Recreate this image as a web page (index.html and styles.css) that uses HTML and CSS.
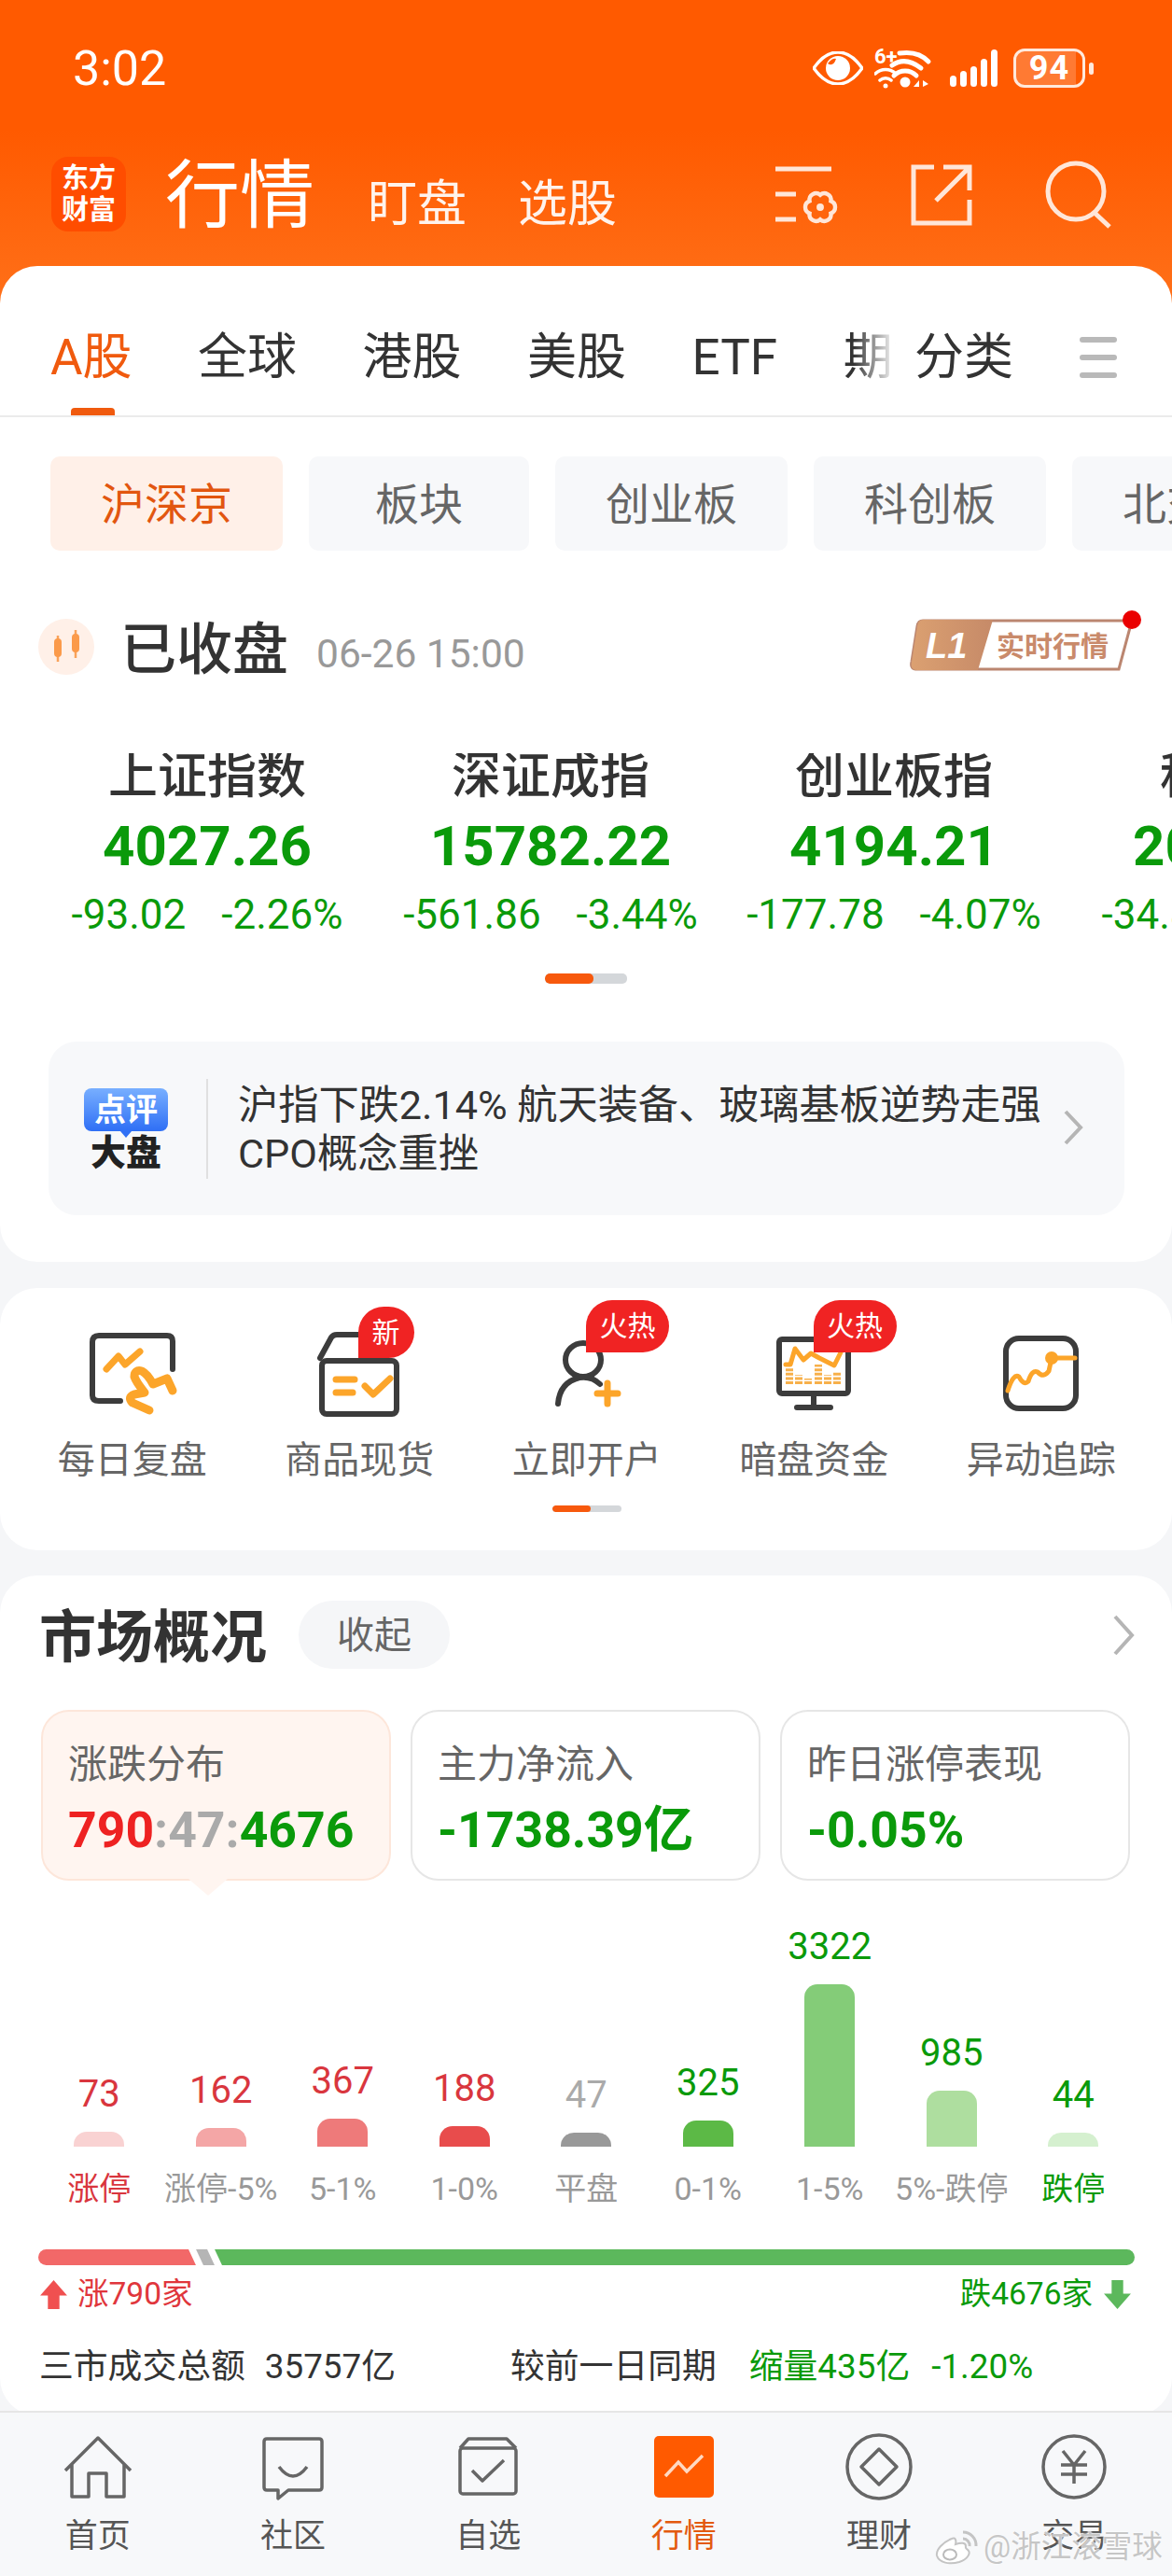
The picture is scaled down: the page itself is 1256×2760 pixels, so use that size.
FILE: index.html
```html
<!DOCTYPE html>
<html lang="zh-CN">
<head>
    <meta charset="UTF-8">
    <title>行情</title>
    <link rel="stylesheet" href="styles.css">
</head>
<body>
<div class="page">
    <div class="scroll">
        <header class="hero">
            <div class="statusbar">
                <span class="clock">3:02</span>
                <div class="status-icons">
                    <svg class="ic-eye" viewBox="0 0 54 36"><path d="M1 18Q13 1 27 1T53 18Q41 35 27 35T1 18Z" fill="none" stroke="#fff" stroke-width="3.5"/><circle cx="27" cy="18" r="13" fill="#fff"/><path d="M16 13Q22 17 25 8Q21 7 16 13Z" fill="#ff5a00"/></svg>
                    <svg class="ic-wifi" viewBox="0 0 62 44"><text x="0" y="17" class="wifi-six">6+</text><circle cx="33" cy="37" r="5.5" fill="#fff"/><path d="M21 30A17 17 0 0 1 45 30" class="wifi-arc"/><path d="M19 19Q33 9 50 22M27 6Q47 3 58 15" class="wifi-arc"/><circle cx="12" cy="41" r="2.5" fill="#fff"/><path d="M6 35A9 9 0 0 1 18 35M1 28A16 16 0 0 1 23 28" class="wifi-arc wifi-thin"/><path d="M42 42L48 35V42ZM52 35L58 39L52 42Z" fill="#fff"/></svg>
                    <div class="signal">
                        <span class="sig-1"></span><span class="sig-2"></span><span class="sig-3"></span><span class="sig-4"></span><span class="sig-5"></span>
                    </div>
                    <div class="battery"><div class="battery-body">94</div><span class="battery-nub"></span></div>
                </div>
            </div>
            <div class="appbar">
                <div class="logo">东方<br>财富</div>
                <div class="app-title">
                    <span class="app-main">行情</span>
                    <span class="app-sub first">盯盘</span>
                    <span class="app-sub">选股</span>
                </div>
                <svg class="ic-set" viewBox="0 0 72 68"><path d="M2 5H62M2 32H24M2 59H24" class="head-line"/><g transform="translate(50 46) scale(.88)"><path d="M13 -7.5A8 8 0 0 1 13 7.5A8 8 0 0 1 0 15A8 8 0 0 1 -13 7.5A8 8 0 0 1 -13 -7.5A8 8 0 0 1 0 -15A8 8 0 0 1 13 -7.5Z" class="head-line"/><circle r="4.5" fill="#ffe6d8"/></g></svg>
                <svg class="ic-share" viewBox="0 0 66 66"><path d="M25 3H3V63H63V38M35 3H63V28M63 3L27 39" class="head-line"/></svg>
                <svg class="ic-search" viewBox="0 0 72 74"><circle cx="33" cy="33" r="30" class="head-line"/><path d="M53 56L69 71" class="head-line"/></svg>
            </div>
        </header>

        <section class="card card-main">
            <nav class="tabs">
                <div class="tabs-scroll">
                    <span class="tab active">A股</span>
                    <span class="tab">全球</span>
                    <span class="tab">港股</span>
                    <span class="tab">美股</span>
                    <span class="tab">ETF</span>
                    <span class="tab">期货</span>
                </div>
                <span class="tab tab-more">分类</span>
                <div class="tab-menu"><i></i><i></i><i></i></div>
            </nav>

            <div class="chips">
                <span class="chip chip-on">沪深京</span>
                <span class="chip chip-b">板块</span>
                <span class="chip">创业板</span>
                <span class="chip">科创板</span>
                <span class="chip">北交所</span>
            </div>

            <div class="close-row">
                <svg class="close-icon" viewBox="0 0 60 60"><circle cx="30" cy="30" r="30" fill="#fff0e8"/><path d="M21 18V46M40 12V42" stroke="#f9a25a" stroke-width="2.5"/><rect x="17" y="21" width="8" height="20" rx="4" fill="#fb9a4a"/><rect x="36" y="16" width="8" height="20" rx="4" fill="#fb9a4a"/></svg>
                <span class="close-title">已收盘</span>
                <span class="close-time">06-26 15:00</span>
                <svg class="live-badge" viewBox="0 0 250 70">
                    <defs><linearGradient id="lg" x1="0" x2="1"><stop offset="0" stop-color="#dba071"/><stop offset="1" stop-color="#c68a68"/></linearGradient></defs>
                    <path d="M14 15H238L224 67H8Q0 67 2 59L8 21Q9 15 14 15Z" fill="#fff" stroke="#bb8670" stroke-width="3"/>
                    <path d="M14 14H89L73 68H8Q0 68 2 59L8 21Q9 14 14 14Z" fill="url(#lg)"/>
                    <text x="17" y="55" class="live-l1">L1</text>
                    <text x="93" y="53" class="live-text">实时行情</text>
                    <circle cx="238" cy="14" r="10" fill="#ea0000"/>
                </svg>
            </div>

            <div class="indexes">
                <div class="index">
                    <div class="index-name">上证指数</div>
                    <div class="index-val">4027.26</div>
                    <div class="index-chg"><span>-93.02</span><span>-2.26%</span></div>
                </div>
                <div class="index">
                    <div class="index-name">深证成指</div>
                    <div class="index-val">15782.22</div>
                    <div class="index-chg"><span>-561.86</span><span>-3.44%</span></div>
                </div>
                <div class="index">
                    <div class="index-name">创业板指</div>
                    <div class="index-val">4194.21</div>
                    <div class="index-chg"><span>-177.78</span><span>-4.07%</span></div>
                </div>
                <div class="index">
                    <div class="index-name">科创50</div>
                    <div class="index-val">2085.63</div>
                    <div class="index-chg"><span>-34.82</span><span>-2.71%</span></div>
                </div>
            </div>

            <div class="dots dots-wide"><i></i></div>

            <div class="comment">
                <div class="comment-logo">
                    <div class="comment-bubble">点评</div>
                    <div class="comment-big">大盘</div>
                </div>
                <div class="comment-text">沪指下跌2.14% 航天装备、玻璃基板逆势走强<br>CPO概念重挫</div>
                <svg class="chev comment-chev" viewBox="0 0 22 38"><path d="M3 2L19 19L3 36"/></svg>
            </div>
        </section>

        <section class="card quick">
            <div class="quick-grid">
                <div class="quick-item">
                    <svg viewBox="0 0 120 100"><path d="M103 42V12Q103 6 97 6H24Q17 6 17 13V70Q17 76 24 76H47" class="q-dark"/><path d="M32 42L45 28L52 37L68 23" class="q-org"/><path d="M78 86L60 78Q54 72 62 69L73 67Q64 56 62 50Q62 42 70 44Q76 47 82 58L97 52L103 65" class="q-org q-fat"/></svg>
                    <span>每日复盘</span>
                </div>
                <div class="quick-item">
                    <svg viewBox="0 0 120 100"><path d="M18 30L30 8Q32 5 36 5H70" class="q-dark"/><rect x="20" y="33" width="80" height="57" rx="5" class="q-dark"/><path d="M35 53H55M35 67H53M66 60L75 69L93 52" class="q-org"/></svg>
                    <span>商品现货</span>
                    <b class="tag tag-new">新</b>
                </div>
                <div class="quick-item">
                    <svg viewBox="0 0 120 100"><ellipse cx="56" cy="32" rx="19" ry="18" class="q-dark"/><path d="M29 79Q31 56 52 51Q65 49 74 58" class="q-dark"/><path d="M82 57V79M71 68H93" class="q-org"/></svg>
                    <span>立即开户</span>
                    <b class="tag tag-hot">火热</b>
                </div>
                <div class="quick-item">
                    <svg viewBox="0 0 120 100"><rect x="23" y="10" width="74" height="58" rx="3" class="q-dark"/><path d="M60 69V82M42 83H78" class="q-dark"/><path d="M30 37H35L40 20L49 32L57 25L66 30L82 38L89 24" class="q-org q-thin"/><path d="M34 58V40M44 58V48M54 58V52M65 58V37M75 58V48M85 58V45" class="q-bars"/></svg>
                    <span>暗盘资金</span>
                    <b class="tag tag-hot">火热</b>
                </div>
                <div class="quick-item">
                    <svg viewBox="0 0 120 100"><rect x="22" y="9" width="75" height="75" rx="14" class="q-dark"/><path d="M24 65Q30 46 36 50Q41 60 46 55Q50 42 56 45Q62 52 68 44L71 30H96" class="q-org q-thin"/><circle cx="71" cy="30" r="7" fill="#fca52a"/></svg>
                    <span>异动追踪</span>
                </div>
            </div>
            <div class="dots dots-small"><i></i></div>
        </section>

        <section class="card market">
            <div class="market-head">
                <h2 class="market-title">市场概况</h2>
                <span class="market-pill">收起</span>
                <svg class="chev market-chev" viewBox="0 0 26 44"><path d="M4 2L22 22L4 42"/></svg>
            </div>

            <div class="stats">
                <div class="stat stat-on">
                    <div class="stat-title">涨跌分布</div>
                    <div class="stat-val"><span class="up">790</span><span class="flat">:47:</span><span class="down">4676</span></div>
                </div>
                <div class="stat">
                    <div class="stat-title">主力净流入</div>
                    <div class="stat-val down">-1738.39亿</div>
                </div>
                <div class="stat">
                    <div class="stat-title">昨日涨停表现</div>
                    <div class="stat-val down">-0.05%</div>
                </div>
            </div>

            <div class="chart">
                <div class="col"><span class="col-num up-soft">73</span><i class="b1" style="height:16px"></i></div>
                <div class="col"><span class="col-num up-soft">162</span><i class="b2" style="height:20px"></i></div>
                <div class="col"><span class="col-num up-soft">367</span><i class="b3" style="height:30px"></i></div>
                <div class="col"><span class="col-num up-soft">188</span><i class="b4" style="height:22px"></i></div>
                <div class="col"><span class="col-num flat">47</span><i class="b5" style="height:15px"></i></div>
                <div class="col"><span class="col-num down">325</span><i class="b6" style="height:28px"></i></div>
                <div class="col"><span class="col-num down">3322</span><i class="b7" style="height:174px"></i></div>
                <div class="col"><span class="col-num down">985</span><i class="b8" style="height:60px"></i></div>
                <div class="col"><span class="col-num down">44</span><i class="b9" style="height:15px"></i></div>
            </div>
            <div class="chart-labels">
                <span class="up-soft">涨停</span>
                <span>涨停-5%</span>
                <span>5-1%</span>
                <span>1-0%</span>
                <span>平盘</span>
                <span>0-1%</span>
                <span>1-5%</span>
                <span>5%-跌停</span>
                <span class="down">跌停</span>
            </div>

            <div class="ratio"><i class="ratio-up"></i><i class="ratio-flat"></i><i class="ratio-down"></i></div>
            <div class="updown">
                <span class="updown-up"><svg viewBox="0 0 30 32"><path d="M15 1L29 17H21V31H9V17H1Z" fill="#f05050"/></svg>涨790家</span>
                <span class="updown-down">跌4676家<svg viewBox="0 0 30 32"><path d="M9 1H21V15H29L15 31L1 15H9Z" fill="#5cb85c"/></svg></span>
            </div>

            <div class="turnover">
                <div class="turn-left"><span>三市成交总额</span><span class="turn-num">35757亿</span></div>
                <span>较前一日同期</span>
                <span class="down turn-diff">缩量435亿</span>
                <span class="down turn-pct">-1.20%</span>
            </div>
        </section>
    </div>

    <footer class="bottom-nav">
        <div class="nav-item">
            <svg viewBox="0 0 90 76"><path d="M10 41L45 6L80 41M17 34V69H35V44H54V69H73V34" class="nav-line"/></svg>
            <span>首页</span>
        </div>
        <div class="nav-item">
            <svg viewBox="0 0 90 76"><path d="M17 7H73Q76 7 76 10V59Q76 62 73 62H40L29 71V62H17Q14 62 14 59V10Q14 7 17 7Z" class="nav-line"/><path d="M30 37Q45 57 60 37" class="nav-line"/></svg>
            <span>社区</span>
        </div>
        <div class="nav-item">
            <svg viewBox="0 0 90 76"><rect x="15" y="17" width="60" height="49" rx="3" class="nav-line"/><path d="M15 17L24 7H65L75 17M28 41L39 52L62 30" class="nav-line"/></svg>
            <span>自选</span>
        </div>
        <div class="nav-item nav-on">
            <svg viewBox="0 0 90 76"><rect x="13" y="4" width="64" height="66" rx="5" fill="#ff5a00"/><path d="M25 47L39 32L48 42L65 25" fill="none" stroke="#ffd9c2" stroke-width="3.5"/></svg>
            <span>行情</span>
        </div>
        <div class="nav-item">
            <svg viewBox="0 0 90 76"><circle cx="45" cy="37" r="34" class="nav-line"/><path d="M45 18L64 37L45 56L26 37Z" class="nav-line"/></svg>
            <span>理财</span>
        </div>
        <div class="nav-item">
            <svg viewBox="0 0 90 76"><circle cx="45" cy="37" r="33" class="nav-line"/><path d="M33 20L45 35L57 20M31 35H59M31 45H59M45 35V55" class="nav-line"/></svg>
            <span>交易</span>
        </div>
        <div class="watermark">
            <svg viewBox="0 0 46 38"><path d="M18 10C8 14 1 22 2 28C4 36 16 38 26 35C35 32 38 26 36 23C35 21 32 21 33 18C33 14 28 14 22 16C23 12 22 8 18 10Z" fill="#fff" stroke="#c4c4c4" stroke-width="2"/><ellipse cx="16" cy="27" rx="7" ry="5.5" fill="none" stroke="#bbb" stroke-width="2"/><path d="M30 10A7 7 0 0 1 37 18M30 3A14 14 0 0 1 44 18" fill="none" stroke="#c4c4c4" stroke-width="3"/></svg>
            <span>@浙江滚雪球</span>
        </div>
    </footer>
</div>
</body>
</html>
```

FILE: styles.css
```css
* {
    box-sizing: border-box;
}
body {
    margin: 0;
    font-family: Roboto, "Noto Sans CJK SC", sans-serif;
    color: #333;
    background: #f5f6f8;
}
.page {
    width: 1256px;
    height: 2760px;
    display: flex;
    flex-direction: column;
    overflow: hidden;
}
.scroll {
    flex: 1;
    min-height: 0;
    overflow: hidden;
}
svg {
    display: block;
    flex: none;
}

/* orange header */
.hero {
    height: 325px;
    color: #fff;
    background: linear-gradient(#ff5a00 0, #ff5a00 140px, #ff7019 325px);
}
.statusbar {
    height: 144px;
    padding: 2px 84px 0 78px;
    display: flex;
    align-items: center;
    justify-content: space-between;
}
.clock {
    font-size: 52px;
}
.status-icons {
    display: flex;
    align-items: center;
}
.ic-eye {
    width: 54px;
    height: 36px;
}
.ic-wifi {
    width: 62px;
    height: 44px;
    margin-left: 12px;
}
.wifi-six {
    font-size: 22px;
    font-weight: 700;
    fill: #fff;
}
.wifi-arc {
    fill: none;
    stroke: #fff;
    stroke-width: 5;
    stroke-linecap: round;
}
.wifi-thin {
    stroke-width: 3.5;
}
.signal {
    margin-left: 19px;
    width: 52px;
    height: 40px;
    display: flex;
    align-items: flex-end;
    gap: 4px;
}
.signal span {
    width: 7px;
    border-radius: 4px;
    background: #fff;
}
.sig-1 { height: 12px; }
.sig-2 { height: 17px; }
.sig-3 { height: 22px; }
.sig-4 { height: 30px; }
.sig-5 { height: 40px; }
.battery {
    margin-left: 16px;
    display: flex;
    align-items: center;
    gap: 4px;
}
.battery-body {
    width: 77px;
    height: 42px;
    border: 3px solid #ffe9dc;
    border-radius: 12px;
    background: linear-gradient(90deg, #ff7a33 0, #ff7a33 90%, transparent 90%);
    font-size: 36px;
    font-weight: 700;
    line-height: 36px;
    text-align: center;
    letter-spacing: 1px;
}
.battery-nub {
    width: 5px;
    height: 13px;
    border-radius: 3px;
    background: #ffe9dc;
}
.appbar {
    padding: 24px 0 0 55px;
    display: flex;
    align-items: flex-start;
}
.logo {
    width: 80px;
    height: 80px;
    border-radius: 18px;
    background: #ff4d00;
    font-size: 29px;
    font-weight: 700;
    line-height: 34px;
    padding-top: 6px;
    text-align: center;
}
.app-title {
    margin-left: 42px;
    height: 80px;
    display: flex;
    align-items: baseline;
}
.app-main {
    font-size: 80px;
    line-height: 84px;
}
.app-sub {
    font-size: 53px;
    margin-left: 55px;
    color: #fff3ec;
}
.app-sub.first {
    margin-left: 57px;
}
.head-line {
    fill: none;
    stroke: #ffe6d8;
    stroke-width: 5;
}
.ic-set {
    width: 72px;
    height: 68px;
    margin: 8px 0 0 168px;
}
.ic-share {
    width: 66px;
    height: 66px;
    margin: 8px 0 0 75px;
}
.ic-search {
    width: 72px;
    height: 74px;
    margin: 4px 0 0 78px;
}

/* white cards */
.card {
    background: #fff;
    border-radius: 40px;
}
.card-main {
    position: relative;
    margin-top: -40px;
    padding-bottom: 50px;
}

.tabs {
    position: relative;
    height: 162px;
    padding: 69px 0 0 54px;
    display: flex;
    align-items: flex-start;
    border-bottom: 2px solid #ebebeb;
}
.tabs::after {
    content: "";
    position: absolute;
    left: 76px;
    bottom: 0;
    width: 47px;
    height: 8px;
    border-radius: 4px 4px 0 0;
    background: #f05a0e;
}
.tabs-scroll {
    width: 906px;
    display: flex;
    gap: 70.5px;
    overflow: hidden;
    -webkit-mask-image: linear-gradient(90deg, #000 95%, transparent 100%);
    mask-image: linear-gradient(90deg, #000 95%, transparent 100%);
}
.tab {
    flex: none;
    font-size: 53px;
    line-height: 58px;
    color: #333;
}
.tab.active {
    color: #f05a0e;
}
.tab-more {
    margin-left: 20px;
}
.tab-menu {
    margin: 7px 0 0 71px;
    width: 40px;
}
.tab-menu i {
    display: block;
    height: 6px;
    margin-bottom: 13px;
    border-radius: 3px;
    background: #b9b9b9;
}

.chips {
    margin-top: 42px;
    padding-left: 54px;
    display: flex;
    gap: 28px;
    overflow: hidden;
}
.chip {
    flex: none;
    width: 249px;
    height: 101px;
    border-radius: 10px;
    background: #f7f8fa;
    font-size: 47px;
    line-height: 103px;
    text-align: center;
    color: #666;
}
.chip-b {
    width: 236px;
}
.chip-on {
    background: #fff0e8;
    color: #e2560f;
}

.close-row {
    position: relative;
    margin-top: 72px;
    height: 61px;
    padding-left: 41px;
    display: flex;
    align-items: center;
}
.close-icon {
    width: 60px;
    height: 60px;
}
.close-title {
    margin: -4px 0 0 28px;
    font-size: 60px;
    font-weight: 500;
    color: #333;
}
.close-time {
    margin: 16px 0 0 30px;
    font-size: 42.5px;
    color: #999;
}
.live-badge {
    position: absolute;
    left: 975px;
    top: -12px;
    width: 250px;
    height: 70px;
}
.live-l1 {
    font-family: "Liberation Sans", sans-serif;
    font-size: 38px;
    font-weight: 700;
    font-style: italic;
    fill: #fff;
}
.live-text {
    font-size: 30px;
    font-weight: 700;
    fill: #c98a6b;
}

.indexes {
    margin-top: 84px;
    padding-left: 38px;
    display: flex;
    overflow: hidden;
}
.index {
    flex: none;
    width: 368px;
    text-align: center;
    white-space: nowrap;
}
.index-name {
    font-size: 53px;
    font-weight: 500;
    line-height: 50px;
    color: #333;
}
.index-val {
    margin-top: 15px;
    font-size: 60px;
    font-weight: 700;
    line-height: 70px;
    color: #0a9a0a;
}
.index-chg {
    margin-top: 13px;
    display: flex;
    justify-content: center;
    gap: 38px;
    font-size: 44px;
    line-height: 50px;
    color: #0a9a0a;
}

.dots {
    margin: 38px auto 0;
    background: #d4d7da;
    overflow: hidden;
}
.dots i {
    display: block;
    height: 100%;
    background: #f7590d;
}
.dots-wide {
    width: 88px;
    height: 11px;
    border-radius: 5px;
}
.dots-wide i {
    width: 52px;
    border-radius: 5px;
}
.dots-small {
    width: 74px;
    height: 7px;
    margin-top: 23px;
    border-radius: 4px;
}
.dots-small i {
    width: 41px;
    border-radius: 4px;
}

.comment {
    position: relative;
    margin: 62px 0 0 52px;
    width: 1153px;
    height: 186px;
    border-radius: 30px;
    background: #f7f8fa;
    display: flex;
    align-items: center;
}
.comment-logo {
    margin-left: 38px;
    width: 90px;
}
.comment-bubble {
    position: relative;
    height: 46px;
    border-radius: 8px;
    background: linear-gradient(#78afff, #2f6ff5);
    color: #fff;
    font-size: 34px;
    font-weight: 700;
    line-height: 46px;
    text-align: center;
}
.comment-bubble::after {
    content: "";
    position: absolute;
    left: 39px;
    top: 46px;
    border: 6px solid transparent;
    border-top: 7px solid #2f6ff5;
    border-bottom: 0;
}
.comment-big {
    margin-top: 5px;
    font-size: 38px;
    font-weight: 900;
    line-height: 36px;
    text-align: center;
    color: #222;
}
.comment-text {
    margin-left: 41px;
    padding: 3px 0 0 32px;
    border-left: 2px solid #e0e0e0;
    font-size: 43.2px;
    line-height: 52px;
    white-space: nowrap;
    color: #333;
}
.chev {
    fill: none;
}
.chev path {
    fill: none;
    stroke: #b5b5b5;
    stroke-width: 4;
}
.comment-chev {
    position: absolute;
    left: 1087px;
    top: 73px;
    width: 22px;
    height: 38px;
}

/* quick entries */
.quick {
    margin-top: 28px;
    height: 281px;
    padding: 45px 18px 0 20px;
}
.quick-grid {
    display: grid;
    grid-template-columns: repeat(5, 243.5px);
}
.quick-item {
    position: relative;
    display: flex;
    flex-direction: column;
    align-items: center;
}
.quick-item svg {
    width: 120px;
    height: 100px;
}
.quick-item span {
    margin-top: 15px;
    font-size: 40px;
    line-height: 50px;
    color: #666;
}
.q-dark,
.q-org,
.q-bars {
    fill: none;
    stroke-linecap: round;
    stroke-linejoin: round;
}
.q-dark {
    stroke: #3c3c3c;
    stroke-width: 6;
}
.q-org {
    stroke: #fca52a;
    stroke-width: 7;
}
.q-fat {
    stroke-width: 9;
}
.q-thin {
    stroke-width: 5;
}
.q-bars {
    stroke: #f7b04a;
    stroke-width: 8;
    stroke-linecap: butt;
    stroke-dasharray: 3 1.6;
}
.tag {
    position: absolute;
    border-radius: 28px 28px 28px 0;
    background: #f02323;
    color: #fff;
    font-size: 30px;
    font-weight: 400;
    text-align: center;
}
.tag-new {
    left: 120px;
    top: -25px;
    width: 60px;
    height: 55px;
    line-height: 55px;
}
.tag-hot {
    left: 121px;
    top: -32px;
    width: 89px;
    height: 56px;
    line-height: 56px;
}

/* market overview */
.market {
    margin-top: 27px;
    padding-top: 27px;
    height: 900px;
}
.market-head {
    position: relative;
    padding-left: 42px;
    height: 73px;
    display: flex;
    align-items: center;
}
.market-title {
    margin: -4px 0 0;
    font-size: 61px;
    font-weight: 700;
    color: #333;
}
.market-pill {
    margin-left: 34px;
    width: 162px;
    height: 73px;
    border-radius: 37px;
    background: #f5f6f8;
    font-size: 40px;
    line-height: 75px;
    text-align: center;
    color: #666;
}
.market-chev {
    position: absolute;
    left: 1191px;
    top: 15px;
    width: 26px;
    height: 44px;
}
.stats {
    margin: 44px 45px 0 44px;
    display: grid;
    grid-template-columns: repeat(3, 1fr);
    gap: 21px;
}
.stat {
    position: relative;
    height: 183px;
    padding: 32px 0 0 27px;
    border: 2px solid #e6e6e6;
    border-radius: 30px;
}
.stat-on {
    background: #fff5f0;
    border-color: #fde6da;
}
.stat-on::after {
    content: "";
    position: absolute;
    left: 156px;
    bottom: -18px;
    border: 21px solid transparent;
    border-top: 18px solid #fff5f0;
    border-bottom: 0;
}
.stat-title {
    font-size: 42px;
    line-height: 50px;
    color: #666;
}
.stat-val {
    margin-top: 15px;
    font-size: 53.5px;
    font-weight: 700;
    line-height: 60px;
    white-space: nowrap;
}
.up {
    color: #ee2222;
}
.up-soft {
    color: #d9363e;
}
.flat {
    color: #aaa;
}
.down {
    color: #0a9a0a;
}

.chart {
    margin-top: 45px;
    height: 240px;
    padding-left: 41px;
    display: grid;
    grid-template-columns: repeat(9, 130.5px);
    align-items: end;
}
.col {
    display: flex;
    flex-direction: column;
    align-items: center;
}
.col-num {
    font-size: 40px;
    line-height: 50px;
    margin-bottom: 15px;
}
.col i {
    display: block;
    width: 54px;
    border-radius: 14px 14px 0 0;
}
.b1 { background: #f9d2d2; }
.b2 { background: #f4a6a6; }
.b3 { background: #ee7a7a; }
.b4 { background: #e84c4c; }
.b5 { background: #999; }
.b6 { background: #5cb946; }
.b7 { background: #84cc78; }
.b8 { background: #aede9f; }
.b9 { background: #d5f0cf; }
.chart-labels {
    margin-top: 20px;
    padding-left: 41px;
    display: grid;
    grid-template-columns: repeat(9, 130.5px);
    font-size: 34px;
    line-height: 50px;
    text-align: center;
    white-space: nowrap;
    color: #999;
}
.ratio {
    margin: 40px 0 0 41px;
    width: 1175px;
    height: 17px;
    border-radius: 9px;
    display: flex;
    gap: 8px;
    overflow: hidden;
}
.ratio i {
    display: block;
    transform: skewX(25deg);
}
.ratio-up {
    width: 173px;
    margin-left: -8px;
    background: #f26868;
}
.ratio-flat {
    width: 12px;
    background: #b5b5b5;
}
.ratio-down {
    flex: 1;
    margin-right: -8px;
    background: #5cb85c;
}
.updown {
    margin-top: 11px;
    padding: 0 43px 0 42px;
    height: 40px;
    display: flex;
    justify-content: space-between;
    font-size: 33.5px;
    line-height: 40px;
}
.updown span {
    display: flex;
    align-items: center;
}
.updown svg {
    width: 31px;
    height: 33px;
}
.updown-up {
    gap: 10px;
    color: #e0363c;
}
.updown-down {
    gap: 11px;
    color: #0a9a0a;
}
.turnover {
    margin-top: 33px;
    padding-left: 42px;
    display: flex;
    font-size: 36.8px;
    line-height: 50px;
    white-space: nowrap;
    color: #333;
}
.turn-left {
    width: 505px;
}
.turn-num {
    margin-left: 21px;
}
.turn-diff {
    margin-left: 35px;
}
.turn-pct {
    margin-left: 23px;
}

/* bottom tabs */
.bottom-nav {
    flex: none;
    position: relative;
    height: 177px;
    padding-top: 21px;
    display: grid;
    grid-template-columns: repeat(6, 1fr);
    align-content: start;
    border-top: 2px solid #e6e6e6;
    background: #f7f8fa;
}
.nav-item {
    display: flex;
    flex-direction: column;
    align-items: center;
}
.nav-item svg {
    width: 90px;
    height: 76px;
}
.nav-item span {
    margin-top: 11px;
    font-size: 35px;
    line-height: 50px;
    color: #555;
}
.nav-on span {
    color: #e35a0f;
}
.nav-line {
    fill: none;
    stroke: #666;
    stroke-width: 3.5;
    stroke-linejoin: round;
}
.watermark {
    position: absolute;
    left: 1002px;
    top: 125px;
    display: flex;
    align-items: center;
    gap: 6px;
}
.watermark svg {
    width: 46px;
    height: 38px;
}
.watermark span {
    font-size: 32.5px;
    line-height: 38px;
    white-space: nowrap;
    color: #c6c6c6;
    text-shadow: 0 0 2px #fff, 0 0 2px #fff;
}
```
